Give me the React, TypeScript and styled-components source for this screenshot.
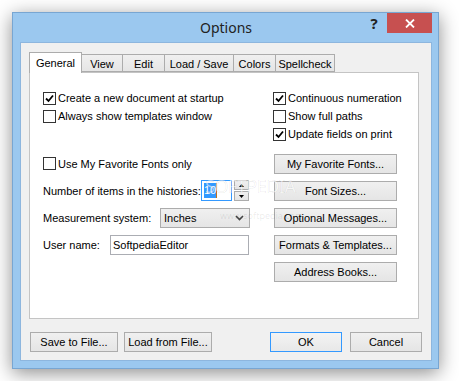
import React from 'react';
import styled, { createGlobalStyle } from 'styled-components';

const uiFont = `"Liberation Sans", Arial, sans-serif`;
const titleFont = `"Noto Sans", "Open Sans", sans-serif`;

const GlobalStyle = createGlobalStyle`
  html, body {
    margin: 0;
    padding: 0;
    background: #fff;
  }
  body {
    font-family: ${uiFont};
    font-size: 11px;
    color: #000;
  }
`;

const Page = styled.div`
  padding: 12px;
`;

const Frame = styled.div`
  width: 427px;
  height: 357px;
  box-sizing: border-box;
  background: #9bc8ef;
  border: 1px solid #78a6d2;
  box-shadow: 0 4px 18px rgba(0, 0, 0, 0.45);
  padding: 0 6px 7px 7px;
  display: flex;
  flex-direction: column;
`;

const TitleBar = styled.div`
  height: 29px;
  display: grid;
  grid-template-columns: 1fr auto 1fr;
  align-items: start;
`;

const Title = styled.div`
  grid-column: 2;
  line-height: 29px;
  font-family: ${titleFont};
  font-size: 14px;
  color: #222;
`;

const CaptionButtons = styled.div`
  grid-column: 3;
  justify-self: end;
  display: flex;
`;

const HelpButton = styled.div`
  width: 26px;
  height: 20px;
  display: flex;
  align-items: center;
  justify-content: center;
  font-family: ${titleFont};
  font-size: 15px;
  font-weight: bold;
  color: #222;
`;

const CloseButton = styled.div`
  width: 45px;
  height: 20px;
  background: #c75050;
  display: flex;
  align-items: center;
  justify-content: center;
`;

const Client = styled.div`
  flex: 1;
  background: #f0f0f0;
  border: 1px solid #8db6de;
  padding: 9px 12px 8px 8px;
  display: flex;
  flex-direction: column;
`;

const TabStrip = styled.div`
  display: flex;
  align-items: flex-end;
  height: 20px;
`;

const Tab = styled.div<{ $w: number; $active?: boolean }>`
  box-sizing: border-box;
  width: ${p => p.$w}px;
  height: ${p => (p.$active ? 21 : 18)}px;
  margin-left: -1px;
  margin-bottom: ${p => (p.$active ? -1 : 0)}px;
  border: 1px solid #acacac;
  border-bottom: ${p => (p.$active ? 'none' : '1px solid #acacac')};
  background: ${p => (p.$active ? '#fff' : 'linear-gradient(#f0f0f0, #e5e5e5)')};
  position: relative;
  z-index: ${p => (p.$active ? 2 : 1)};
  display: flex;
  align-items: center;
  justify-content: center;
  padding-top: ${p => (p.$active ? 0 : 1)}px;
  white-space: nowrap;

  &:first-child {
    margin-left: 0;
  }
`;

const Panel = styled.div`
  box-sizing: border-box;
  height: 247px;
  background: #fff;
  border: 1px solid #c4c4c4;
  padding: 16px 0 0 13px;
  display: flex;
  position: relative;
`;

const Column = styled.div<{ $w?: number }>`
  width: ${p => (p.$w ? `${p.$w}px` : 'auto')};
  display: flex;
  flex-direction: column;
`;

const CheckRow = styled.label`
  height: 18px;
  display: flex;
  align-items: center;
  white-space: nowrap;
`;

const Box = styled.span`
  box-sizing: border-box;
  width: 13px;
  height: 13px;
  border: 1px solid #333;
  background: #fff;
  margin-right: 2px;
  display: flex;
  align-items: center;
  justify-content: center;
  flex-shrink: 0;
`;

const Spacer = styled.div<{ $h: number }>`
  height: ${p => p.$h}px;
`;

const FormRow = styled.div`
  height: 27px;
  display: flex;
  align-items: center;
  white-space: nowrap;
`;

const FieldLabel = styled.span<{ $w: number }>`
  width: ${p => p.$w}px;
  flex-shrink: 0;
`;

const SpinInput = styled.div`
  box-sizing: border-box;
  width: 31px;
  height: 21px;
  border: 1px solid #3399ff;
  background: #fff;
  padding-left: 2px;
  display: flex;
  align-items: center;
`;

const Selected = styled.span`
  background: #3399ff;
  color: #fff;
  line-height: 15px;
  border-right: 1px solid #c07020;
`;

const Spinner = styled.div`
  display: flex;
  flex-direction: column;
  margin-left: 2px;
`;

const SpinPart = styled.div`
  box-sizing: border-box;
  width: 15px;
  height: 10px;
  border: 1px solid #acacac;
  background: linear-gradient(#f0f0f0, #e5e5e5);
  display: flex;
  align-items: center;
  justify-content: center;

  & + & {
    margin-top: 1px;
  }
`;

const Combo = styled.div`
  box-sizing: border-box;
  width: 90px;
  height: 20px;
  border: 1px solid #acacac;
  background: linear-gradient(#f0f0f0, #e5e5e5);
  padding: 0 5px 0 3px;
  display: flex;
  align-items: center;
  justify-content: space-between;
`;

const TextInput = styled.div`
  box-sizing: border-box;
  width: 139px;
  height: 20px;
  border: 1px solid #abadb3;
  background: #fff;
  padding-left: 2px;
  display: flex;
  align-items: center;
`;

const Button = styled.div<{ $w: number; $default?: boolean }>`
  box-sizing: border-box;
  width: ${p => p.$w}px;
  height: 20px;
  border: 1px solid ${p => (p.$default ? '#3399ff' : '#acacac')};
  background: ${p => (p.$default ? 'linear-gradient(#f3f3f3, #e8e8e8)' : 'linear-gradient(#f0f0f0, #e5e5e5)')};
  display: flex;
  align-items: center;
  justify-content: center;
  white-space: nowrap;
`;

const ButtonRow = styled.div`
  height: 27px;
  display: flex;
  align-items: center;
  padding-left: 1px;
`;

const Footer = styled.div`
  margin-top: 13px;
  margin-right: -3px;
  padding-left: 1px;
  display: flex;
  justify-content: space-between;
`;

const Group = styled.div<{ $gap: number }>`
  display: flex;
  gap: ${p => p.$gap}px;
`;

const Watermark = styled.div`
  position: absolute;
  left: 175px;
  top: 104px;
  font-family: ${titleFont};
  font-size: 18px;
  letter-spacing: -0.5px;
  line-height: 18px;
  color: rgba(255, 255, 255, 0.55);
  -webkit-text-stroke: 0.6px rgba(0, 0, 0, 0.1);
  pointer-events: none;
`;

const WatermarkUrl = styled.div`
  font-size: 9px;
  line-height: 9px;
  letter-spacing: 0;
  -webkit-text-stroke: 0;
  color: rgba(0, 0, 0, 0.09);
  margin-top: 16px;
  padding-left: 15px;
`;

const Check = ({ on }: { on?: boolean }) => (
  <Box>
    {on && (
      <svg width="9" height="9" viewBox="0 0 9 9">
        <path d="M1 4.5 L3.5 7 L8 1.5" fill="none" stroke="#000" strokeWidth="1.8" />
      </svg>
    )}
  </Box>
);

const CheckItem = ({ on, children }: { on?: boolean; children: React.ReactNode }) => (
  <CheckRow>
    <Check on={on} />
    {children}
  </CheckRow>
);

const tabs: [string, number][] = [
  ['General', 53],
  ['View', 42],
  ['Edit', 43],
  ['Load / Save', 70],
  ['Colors', 43],
  ['Spellcheck', 60],
];

const sideButtons = [
  'My Favorite Fonts...',
  'Font Sizes...',
  'Optional Messages...',
  'Formats & Templates...',
  'Address Books...',
];

const App: React.FC = () => (
  <>
    <GlobalStyle />
    <Page>
      <Frame>
        <TitleBar>
          <Title>Options</Title>
          <CaptionButtons>
            <HelpButton>?</HelpButton>
            <CloseButton>
              <svg width="10" height="9" viewBox="0 0 10 9">
                <path d="M1 0.5 L9 8.5 M9 0.5 L1 8.5" stroke="#fff" strokeWidth="1.8" />
              </svg>
            </CloseButton>
          </CaptionButtons>
        </TitleBar>
        <Client>
          <TabStrip>
            {tabs.map(([name, w], i) => (
              <Tab key={name} $w={w} $active={i === 0}>
                {name}
              </Tab>
            ))}
          </TabStrip>
          <Panel>
            <Column $w={230}>
              <CheckItem on>Create a new document at startup</CheckItem>
              <CheckItem>Always show templates window</CheckItem>
              <Spacer $h={25} />
              <FormRow>
                <Check />
                Use My Favorite Fonts only
              </FormRow>
              <FormRow>
                <FieldLabel $w={158}>Number of items in the histories:</FieldLabel>
                <SpinInput>
                  <Selected>10</Selected>
                </SpinInput>
                <Spinner>
                  <SpinPart>
                    <svg width="5" height="3" viewBox="0 0 5 3">
                      <path d="M2.5 0 L5 3 L0 3 Z" fill="#000" />
                    </svg>
                  </SpinPart>
                  <SpinPart>
                    <svg width="5" height="3" viewBox="0 0 5 3">
                      <path d="M0 0 L5 0 L2.5 3 Z" fill="#000" />
                    </svg>
                  </SpinPart>
                </Spinner>
              </FormRow>
              <FormRow>
                <FieldLabel $w={117}>Measurement system:</FieldLabel>
                <Combo>
                  Inches
                  <svg width="9" height="6" viewBox="0 0 9 6">
                    <path d="M1 1 L4.5 4.5 L8 1" fill="none" stroke="#444" strokeWidth="1.6" />
                  </svg>
                </Combo>
              </FormRow>
              <FormRow>
                <FieldLabel $w={67}>User name:</FieldLabel>
                <TextInput>SoftpediaEditor</TextInput>
              </FormRow>
            </Column>
            <Column>
              <CheckItem on>Continuous numeration</CheckItem>
              <CheckItem>Show full paths</CheckItem>
              <CheckItem on>Update fields on print</CheckItem>
              <Spacer $h={7} />
              {sideButtons.map(label => (
                <ButtonRow key={label}>
                  <Button $w={123}>{label}</Button>
                </ButtonRow>
              ))}
            </Column>
            <Watermark>
              SOFTPEDIA
              <WatermarkUrl>www.softpedia.com</WatermarkUrl>
            </Watermark>
          </Panel>
          <Footer>
            <Group $gap={6}>
              <Button $w={88}>Save to File...</Button>
              <Button $w={88}>Load from File...</Button>
            </Group>
            <Group $gap={8}>
              <Button $w={72} $default>
                OK
              </Button>
              <Button $w={72}>Cancel</Button>
            </Group>
          </Footer>
        </Client>
      </Frame>
    </Page>
  </>
);

export default App;
